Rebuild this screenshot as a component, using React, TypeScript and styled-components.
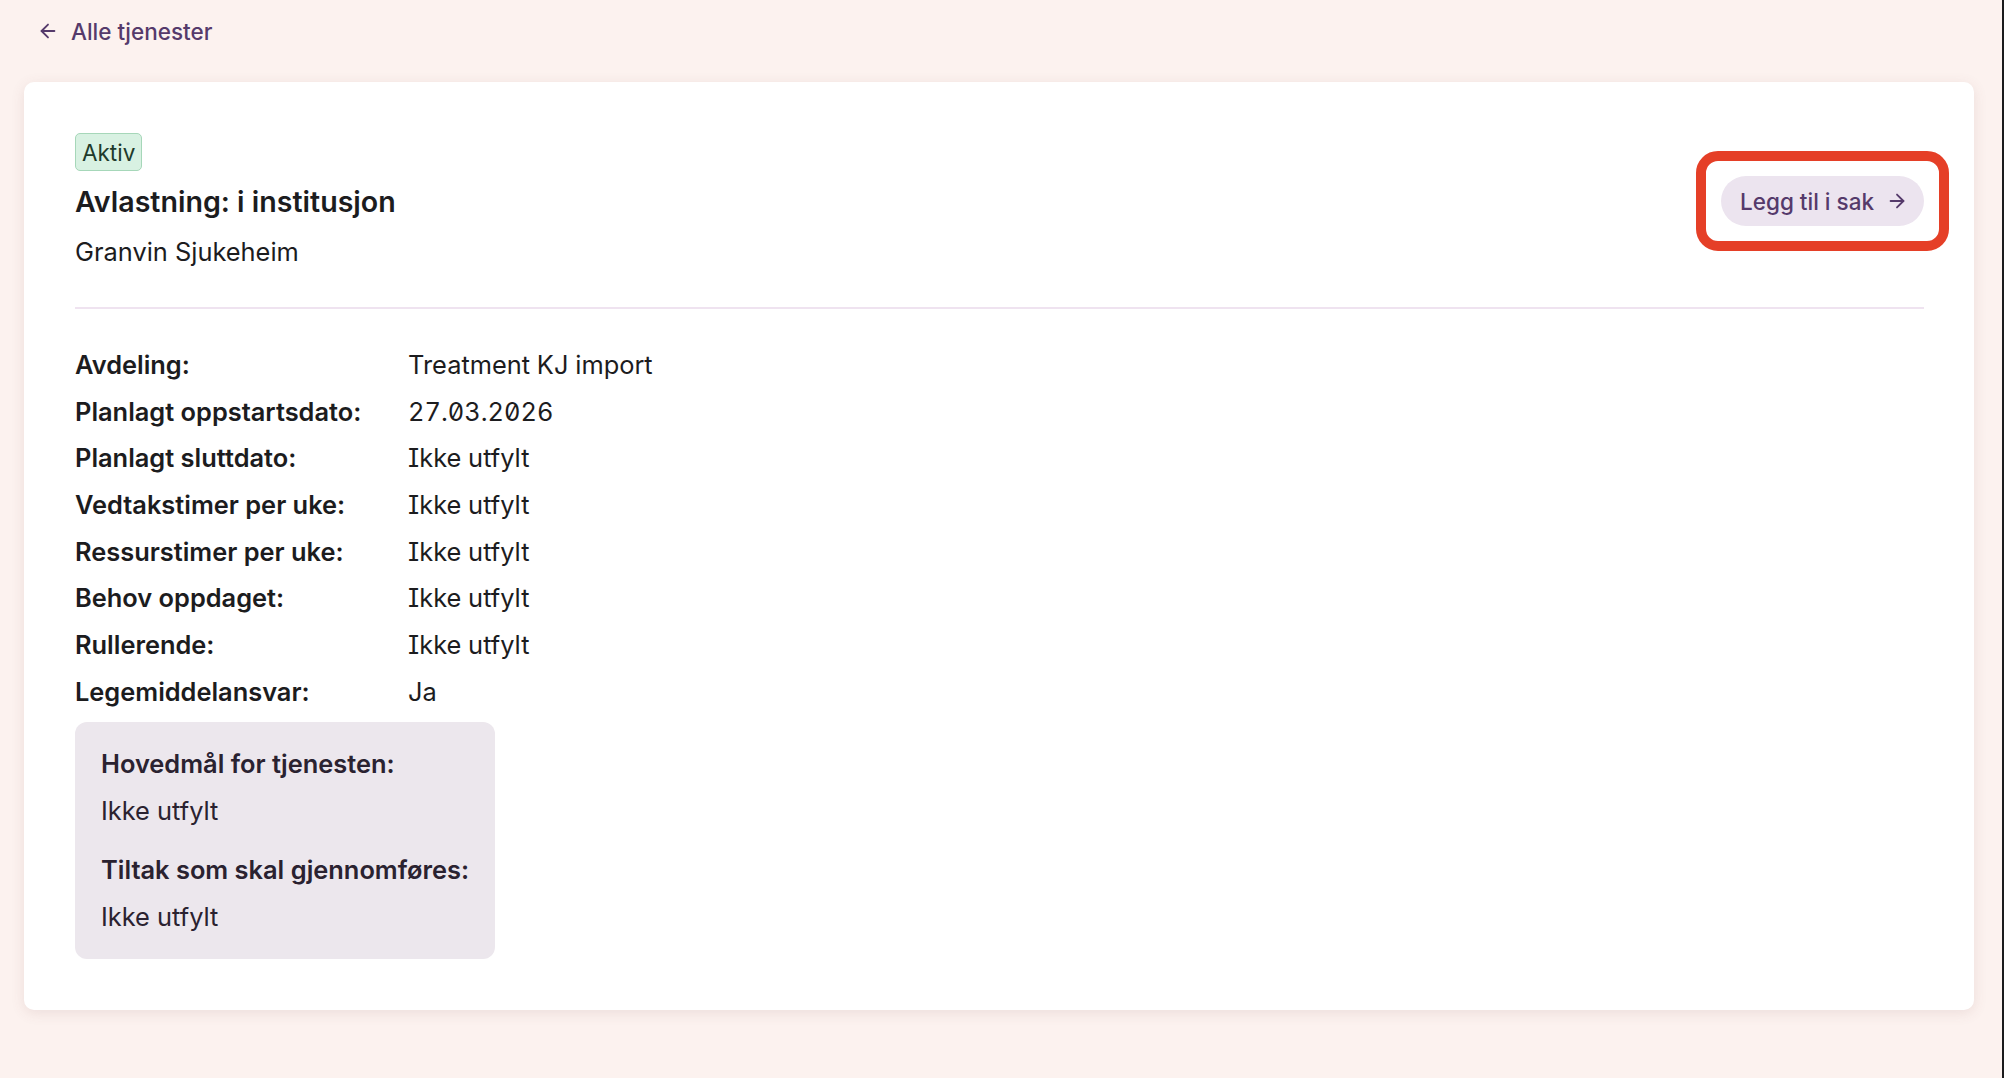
import React from 'react';
import styled, { createGlobalStyle } from 'styled-components';
import { ArrowLeft, ArrowRight } from 'lucide-react';

const COLORS = {
  PAGE: '#fcf2ef',
  CARD: '#ffffff',
  TEXT: '#1c1c1e',
  PURPLE: '#553a6b',
  BUTTON_BG: '#ece4ef',
  DIVIDER: '#efe3f0',
  PANEL_BG: '#ece7ed',
  PANEL_TEXT: '#2a2230',
  HIGHLIGHT: '#e53f27',
};

const FONT_SIZES = {
  SMALL: '22.5px',
  BODY: '25.4px',
  TITLE: '28.6px',
};

const GlobalStyle = createGlobalStyle`
  html, body {
    margin: 0;
    padding: 0;
    background: ${COLORS.PAGE};
  }

  body {
    font-family: Inter, "Noto Sans", "Liberation Sans", sans-serif;
    color: ${COLORS.TEXT};
  }

  * {
    box-sizing: border-box;
  }
`;

type Field = {
  label: string;
  value: string;
};

const FIELDS: Field[] = [
  { label: 'Avdeling:', value: 'Treatment KJ import' },
  { label: 'Planlagt oppstartsdato:', value: '27.03.2026' },
  { label: 'Planlagt sluttdato:', value: 'Ikke utfylt' },
  { label: 'Vedtakstimer per uke:', value: 'Ikke utfylt' },
  { label: 'Ressurstimer per uke:', value: 'Ikke utfylt' },
  { label: 'Behov oppdaget:', value: 'Ikke utfylt' },
  { label: 'Rullerende:', value: 'Ikke utfylt' },
  { label: 'Legemiddelansvar:', value: 'Ja' },
];

const GOALS: Field[] = [
  { label: 'Hovedmål for tjenesten:', value: 'Ikke utfylt' },
  { label: 'Tiltak som skal gjennomføres:', value: 'Ikke utfylt' },
];

const Page = styled.div`
  min-height: 100vh;
  padding: 14px 28px 66px 24px;
  border-right: 2px solid #1b1b1d;
`;

const BackLink = styled.a`
  display: inline-flex;
  align-items: center;
  gap: 12px;
  margin-left: 13px;
  height: 34px;
  color: ${COLORS.PURPLE};
  font-size: ${FONT_SIZES.SMALL};
  font-weight: 500;
  text-decoration: none;
  cursor: pointer;
`;

const Card = styled.section`
  margin-top: 34px;
  padding: 51px 50px 51px 51px;
  background: ${COLORS.CARD};
  border-radius: 10px;
  box-shadow: 0 3px 14px rgba(120, 70, 70, 0.12);
`;

const Header = styled.header`
  display: flex;
  align-items: center;
  justify-content: space-between;
`;

const HeaderText = styled.div`
  display: flex;
  flex-direction: column;
  align-items: flex-start;
`;

const Badge = styled.span`
  display: inline-flex;
  align-items: center;
  height: 38px;
  padding: 0 6px;
  background: #d8f1e2;
  border: 1px solid #a6d7b9;
  border-radius: 5px;
  color: #203a2b;
  font-size: ${FONT_SIZES.SMALL};
`;

const Title = styled.h1`
  margin: 14px 0 0;
  font-size: ${FONT_SIZES.TITLE};
  line-height: 34px;
  font-weight: 600;
`;

const Subtitle = styled.p`
  margin: 16px 0 0;
  font-size: ${FONT_SIZES.BODY};
  line-height: 34px;
`;

// red annotation frame drawn over the action button
const Highlight = styled.div`
  position: relative;

  &::after {
    content: '';
    position: absolute;
    inset: -25px;
    border: 10px solid ${COLORS.HIGHLIGHT};
    border-radius: 22px;
    pointer-events: none;
  }
`;

const ActionButton = styled.button`
  display: inline-flex;
  align-items: center;
  gap: 12px;
  height: 50px;
  padding: 0 16px 0 19px;
  border: none;
  border-radius: 25px;
  background: ${COLORS.BUTTON_BG};
  color: ${COLORS.PURPLE};
  font-family: inherit;
  font-size: ${FONT_SIZES.SMALL};
  font-weight: 500;
  cursor: pointer;
`;

const Divider = styled.hr`
  margin: 38px 0 39px;
  border: none;
  border-top: 2px solid ${COLORS.DIVIDER};
`;

const Details = styled.div`
  display: grid;
  grid-template-columns: 333px auto;
  row-gap: 12.7px;
  justify-content: start;
  align-items: center;
`;

const Label = styled.div`
  font-size: ${FONT_SIZES.BODY};
  line-height: 34px;
  font-weight: 600;
`;

const Value = styled.div`
  font-size: ${FONT_SIZES.BODY};
  line-height: 34px;
  font-feature-settings: 'cv08', 'zero', 'tnum';
`;

const GoalPanel = styled.div`
  grid-column: 1 / -1;
  justify-self: start;
  display: flex;
  flex-direction: column;
  gap: 25px;
  padding: 25px 26px 25px;
  background: ${COLORS.PANEL_BG};
  border-radius: 12px;
  color: ${COLORS.PANEL_TEXT};
`;

const GoalItem = styled.div`
  display: flex;
  flex-direction: column;
  gap: 13px;
`;

const GoalLabel = styled.div`
  font-size: ${FONT_SIZES.BODY};
  line-height: 34px;
  font-weight: 600;
`;

const GoalValue = styled.div`
  font-size: ${FONT_SIZES.BODY};
  line-height: 34px;
`;

export default function App() {
  return (
    <>
      <GlobalStyle />
      <Page>
        <BackLink>
          <ArrowLeft size={22} strokeWidth={2} />
          Alle tjenester
        </BackLink>
        <Card>
          <Header>
            <HeaderText>
              <Badge>Aktiv</Badge>
              <Title>Avlastning: i institusjon</Title>
              <Subtitle>Granvin Sjukeheim</Subtitle>
            </HeaderText>
            <Highlight>
              <ActionButton>
                Legg til i sak
                <ArrowRight size={22} strokeWidth={2} />
              </ActionButton>
            </Highlight>
          </Header>
          <Divider />
          <Details>
            {FIELDS.map((field) => (
              <React.Fragment key={field.label}>
                <Label>{field.label}</Label>
                <Value>{field.value}</Value>
              </React.Fragment>
            ))}
            <GoalPanel>
              {GOALS.map((goal) => (
                <GoalItem key={goal.label}>
                  <GoalLabel>{goal.label}</GoalLabel>
                  <GoalValue>{goal.value}</GoalValue>
                </GoalItem>
              ))}
            </GoalPanel>
          </Details>
        </Card>
      </Page>
    </>
  );
}
